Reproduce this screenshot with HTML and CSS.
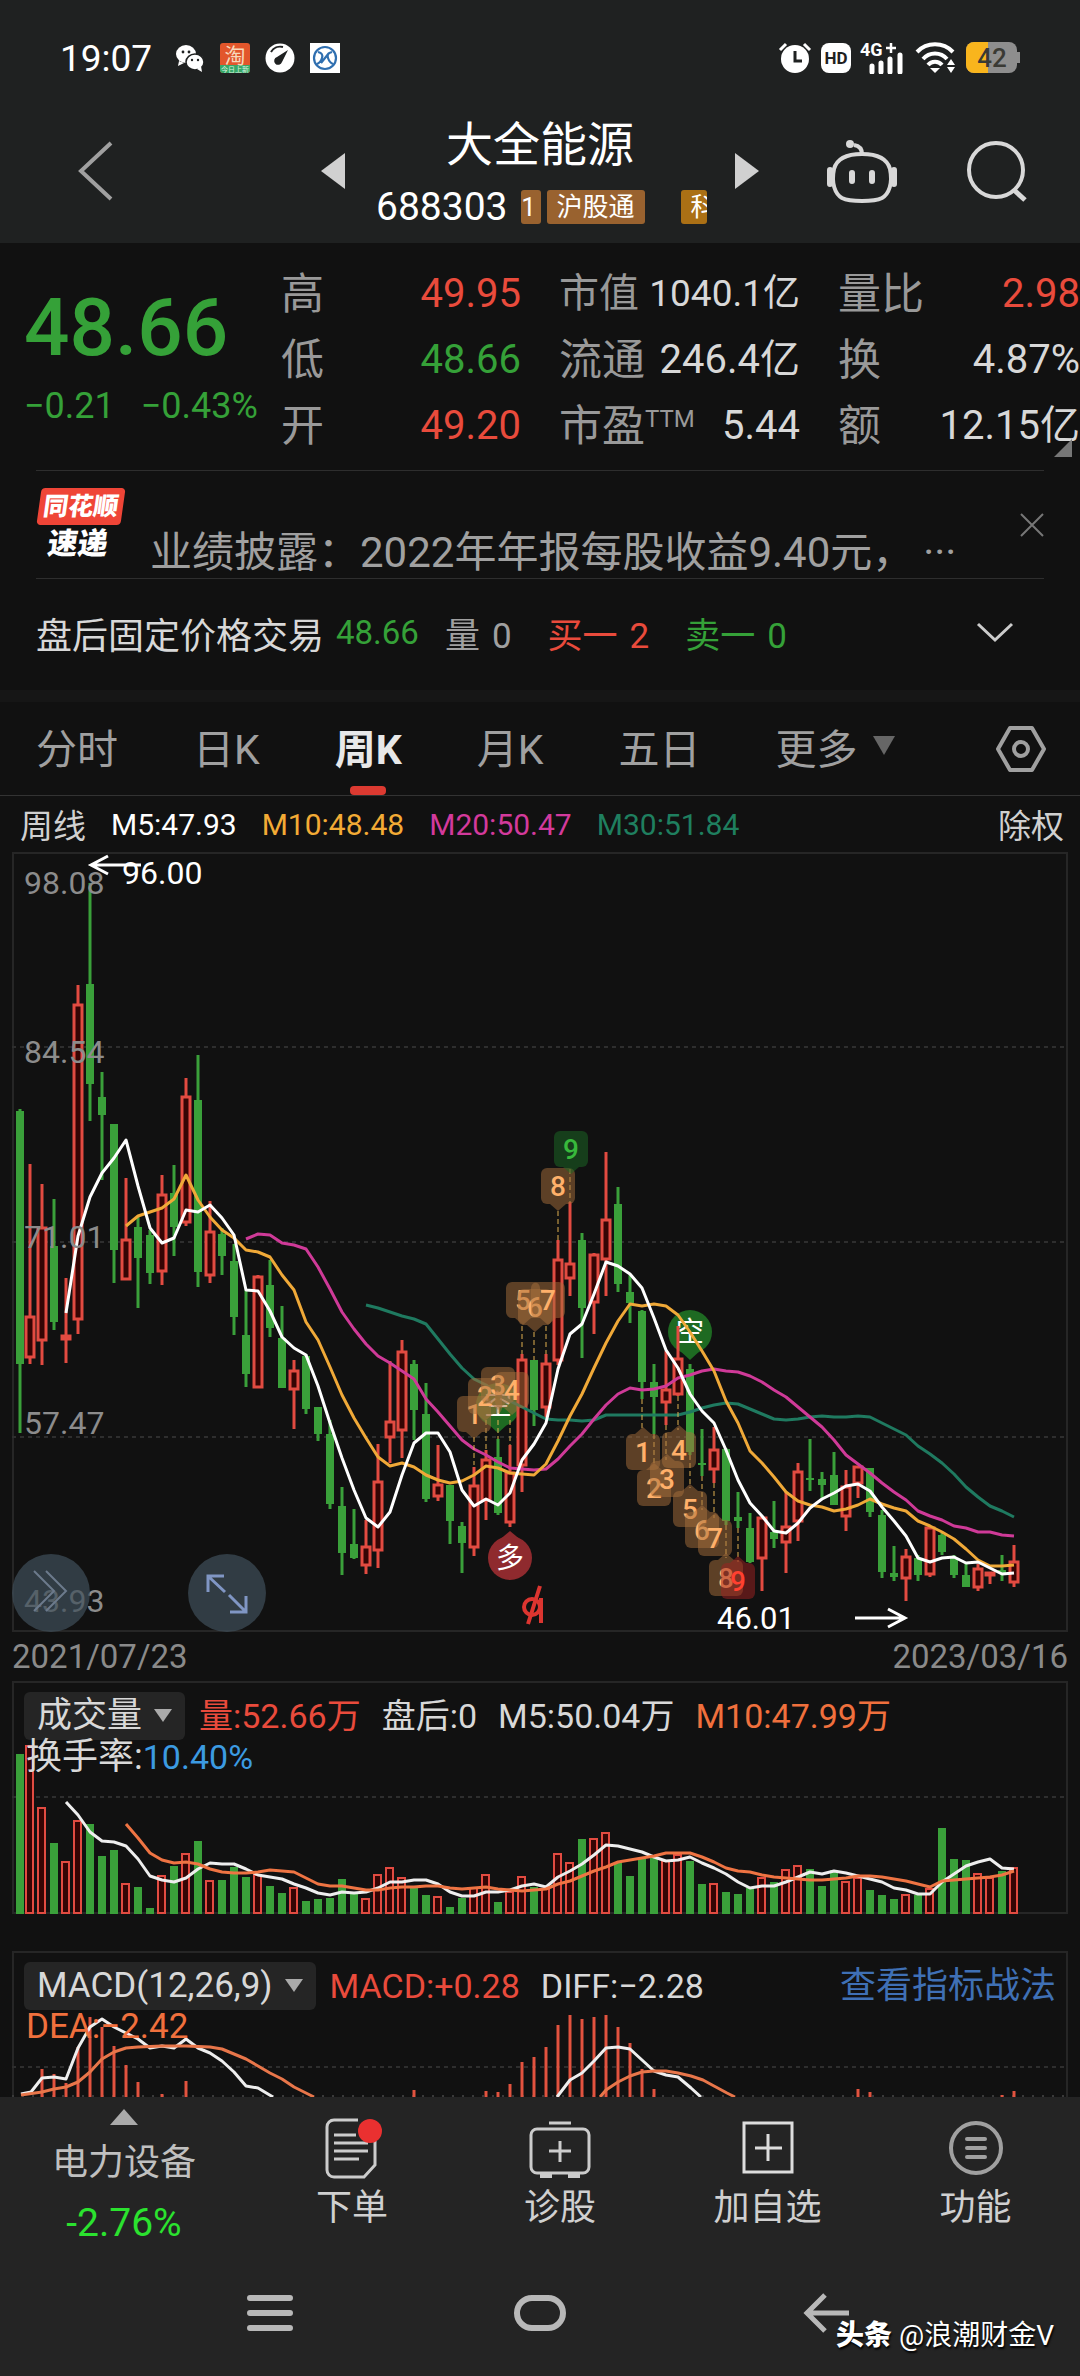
FILE: index.html
```html
<!DOCTYPE html>
<html lang="zh-CN">
<head>
<meta charset="utf-8">
<meta name="viewport" content="width=device-width, initial-scale=1">
<title>大全能源 688303</title>
<link rel="stylesheet" href="styles.css">
</head>
<body>
<header class="top">
  <div class="status">
    <span class="clock">19:07</span>
    <svg class="st-icon" width="30" height="30" viewBox="0 0 30 30"><ellipse cx="11" cy="11" rx="10" ry="9" fill="#fff"/><path d="M4 18l-1 5 6-3z" fill="#fff"/><ellipse cx="20" cy="19" rx="9" ry="8" fill="#fff" stroke="#1f2121" stroke-width="1.5"/><path d="M22 26l5 3-1-6z" fill="#fff"/><g fill="#1f2121"><circle cx="8" cy="9" r="1.4"/><circle cx="14" cy="9" r="1.4"/><circle cx="17" cy="17" r="1.2"/><circle cx="23" cy="17" r="1.2"/></g></svg>
    <svg class="st-icon" width="30" height="30" viewBox="0 0 30 30"><rect width="30" height="30" rx="3" fill="#e2562b"/><path d="M0 22h30v5a3 3 0 0 1-3 3H3a3 3 0 0 1-3-3z" fill="#37a868"/><text x="15" y="20" font-size="21" text-anchor="middle" fill="#f7d8bb">淘</text><text x="15" y="29" font-size="7" text-anchor="middle" fill="#d8f5e0">今日上新</text></svg>
    <svg class="st-icon" width="30" height="30" viewBox="0 0 30 30"><circle cx="15" cy="15" r="14.500" fill="#fff"/><path d="M6 9a11 11 0 0 1 12-5" stroke="#1f2121" stroke-width="2" fill="none"/><path d="M23 7L12 14a4 4 0 1 0 5 5z" fill="#1f2121"/></svg>
    <svg class="st-icon" width="30" height="30" viewBox="0 0 30 30"><rect width="30" height="30" fill="#fff"/><circle cx="15" cy="15" r="11" fill="none" stroke="#2f6fb0" stroke-width="2.200"/><path d="M8 9c4 1 5 3 4 6s-2 5-5 6M22 9c-4 1-5 3-4 6s2 5 5 6M11 20l8-10" stroke="#2f6fb0" stroke-width="2.200" fill="none"/></svg>
    <span class="grow"></span>
    <svg class="st-icon" width="34" height="32" viewBox="0 0 34 32"><circle cx="17" cy="17" r="14" fill="#fff"/><path d="M2 8l6-6M32 8l-6-6" stroke="#fff" stroke-width="3"/><path d="M17 9v10h7" stroke="#1f2121" stroke-width="3" fill="none"/></svg>
    <svg class="st-icon" width="30" height="30" viewBox="0 0 30 30"><rect width="30" height="30" rx="8" fill="#fff"/><text x="15" y="21" font-size="17" font-weight="700" text-anchor="middle" fill="#1f2121">HD</text></svg>
    <svg class="st-icon" width="46" height="32" viewBox="0 0 46 32"><text x="0" y="14" font-size="18" font-weight="700" fill="#fff">4G</text><path d="M26 6h10M31 1v10" stroke="#fff" stroke-width="2.500"/><path d="M12 30v-6M21 30v-9M30 30v-13M40 30v-17" stroke="#fff" stroke-width="5" stroke-linecap="round"/></svg>
    <svg class="st-icon" width="42" height="32" viewBox="0 0 42 32"><g fill="none" stroke="#fff" stroke-width="4"><path d="M2 10a25 25 0 0 1 36 0M8 17a16 16 0 0 1 24 0M13 23a9 9 0 0 1 14 0"/></g><path d="M15 26h10l-5 5z" fill="#fff"/><path d="M32 23l4-6 4 6zM32 25l4 6 4-6z" fill="#fff"/></svg>
    <svg class="st-icon" width="54" height="32" viewBox="0 0 54 32"><rect width="51" height="31" rx="8" fill="#8e8e8e"/><path d="M8 0h14v31H8a8 8 0 0 1-8-8V8a8 8 0 0 1 8-8z" fill="#f9b51d"/><rect x="51" y="10" width="3" height="11" fill="#8e8e8e"/><text x="26" y="25" font-size="26" text-anchor="middle" font-weight="500" fill="#3a3a34">42</text></svg>
  </div>
  <div class="titlebar">
    <button class="plain" aria-label="返回"><svg width="40" height="64" viewBox="0 0 40 64"><path d="M35 4L5 32l30 28" fill="none" stroke="#a0a0a0" stroke-width="4"/></svg></button>
    <button class="plain" aria-label="上一只"><svg width="24" height="36" viewBox="0 0 24 36"><path d="M24 0v36L0 18z" fill="#d0d0d0"/></svg></button>
    <div class="name">
      <h1>大全能源</h1>
      <div class="code"><span>688303</span><i class="tag cut">1</i><i class="tag">沪股通</i><i class="tag gold">科</i></div>
    </div>
    <button class="plain" aria-label="下一只"><svg width="24" height="36" viewBox="0 0 24 36"><path d="M0 0v36l24-18z" fill="#d0d0d0"/></svg></button>
    <button class="plain" aria-label="智能助手"><svg width="70" height="64" viewBox="0 0 70 64"><g fill="none" stroke="#d8d8d8" stroke-width="4"><path d="M35 15c14 0 25 4 28 15 3 14-1 25-8 29-8 4-32 4-40 0-7-4-11-15-8-29 3-11 14-15 28-15z"/><path d="M35 15c0-5-2-8-8-9"/></g><circle cx="23" cy="5" r="4" fill="#d8d8d8"/><path d="M3 31v14M67 31v14M25 34v8M45 34v8" stroke="#d8d8d8" stroke-width="6" stroke-linecap="round"/></svg></button>
    <button class="plain" aria-label="搜索"><svg width="62" height="62" viewBox="0 0 62 62"><circle cx="30" cy="30" r="27" fill="none" stroke="#d8d8d8" stroke-width="4"/><path d="M48 50l11 10" stroke="#d8d8d8" stroke-width="5"/></svg></button>
  </div>
</header>

<main>
  <section class="quote">
    <div class="last green"><strong>48.66</strong><div><span>−0.21</span><span>−0.43%</span></div></div>
    <dl><div><dt>高</dt><dd class="red">49.95</dd></div><div><dt>低</dt><dd class="green">48.66</dd></div><div><dt>开</dt><dd class="red">49.20</dd></div></dl>
    <dl><div class="tight"><dt>市值</dt><dd>1040.1亿</dd></div><div><dt>流通</dt><dd>246.4亿</dd></div><div><dt>市盈<sup>TTM</sup></dt><dd>5.44</dd></div></dl>
    <dl class="edge"><div><dt>量比</dt><dd class="red">2.98</dd></div><div><dt>换</dt><dd>4.87%</dd></div><div><dt>额</dt><dd>12.15亿</dd></div></dl>
    <svg class="corner" width="18" height="18" viewBox="0 0 18 18"><path d="M18 0v18H0z" fill="#777"/></svg>
  </section>

  <section class="news">
    <div class="brand"><b>同花顺</b><em>速递</em></div>
    <a href="#news">业绩披露：2022年年报每股收益9.40元，<span>···</span></a>
    <button class="plain close" aria-label="关闭"><svg width="24" height="24" viewBox="0 0 24 24"><path d="M1 1l22 22M23 1L1 23" stroke="#777" stroke-width="2"/></svg></button>
  </section>

  <section class="after">
    <span>盘后固定价格交易</span><span class="green g1">48.66</span><span class="dim g2">量<span>0</span></span><span class="red g3">买一<span>2</span></span><span class="green g3">卖一<span>0</span></span>
    <button class="plain fold" aria-label="展开"><svg width="38" height="22" viewBox="0 0 38 22"><path d="M2 2l17 16L36 2" fill="none" stroke="#ccc" stroke-width="3"/></svg></button>
  </section>

  <nav class="tabs" aria-label="周期">
    <button>分时</button><button>日K</button><button class="on">周K</button><button>月K</button><button>五日</button>
    <button class="more">更多<svg width="24" height="20" viewBox="0 0 24 20"><path d="M1 0h22L12 19z" fill="#666"/></svg></button>
    <button class="setup" aria-label="设置"><svg width="50" height="46" viewBox="0 0 50 46"><path d="M14 2h22l12 21-12 21H14L2 23z" fill="none" stroke="#a0a0a0" stroke-width="4" stroke-linejoin="round"/><circle cx="25" cy="23" r="7" fill="none" stroke="#a0a0a0" stroke-width="4"/></svg></button>
  </nav>

  <div class="legend">
    <b>周线</b><span>M5:47.93</span><span class="amber">M10:48.48</span><span class="pink">M20:50.47</span><span class="teal">M30:51.84</span><b class="right">除权</b>
  </div>

  <section class="stack" aria-label="周K线图">
    <svg id="kline" viewBox="0 852 1080 780"></svg>
    <button class="round first" aria-label="前移"><svg width="78" height="78" viewBox="0 0 78 78"><path d="M22 17l20 20-20 20M34 17l20 20-20 20" fill="none" stroke="#6c7a8c" stroke-width="2"/></svg></button>
    <button class="round second" aria-label="全屏"><svg width="78" height="78" viewBox="0 0 78 78"><path d="M20 38V22h16M21 23l16 15M58 42v16H42M57 57L41 41" fill="none" stroke="#8096c4" stroke-width="3"/></svg></button>
  </section>
  <div class="dates"><time>2021/07/23</time><time>2023/03/16</time></div>

  <section class="stack volume">
    <svg id="vol" viewBox="0 1681 1080 233"></svg>
    <div class="info">
      <button class="pick">成交量<svg width="18" height="14" viewBox="0 0 18 14"><path d="M0 0h18L9 13z" fill="#aaa"/></svg></button>
      <span class="red">量:52.66万</span><span>盘后:0</span><span>M5:50.04万</span><span class="orange">M10:47.99万</span>
      <p>换手率:<span class="blue">10.40%</span></p>
    </div>
  </section>

  <section class="stack macd">
    <svg id="macd" viewBox="0 1951 1080 146"></svg>
    <div class="info">
      <button class="pick">MACD(12,26,9)<svg width="18" height="14" viewBox="0 0 18 14"><path d="M0 0h18L9 13z" fill="#aaa"/></svg></button>
      <span class="red">MACD:+0.28</span><span>DIFF:−2.28</span><a href="#guide">查看指标战法</a>
      <p class="orange">DEA:−2.42</p>
    </div>
  </section>
</main>

<footer>
  <nav class="actions" aria-label="操作">
    <a class="sector" href="#sector"><svg width="28" height="16" viewBox="0 0 28 16"><path d="M14 0l14 16H0z" fill="#aaa"/></svg><span>电力设备</span><b>-2.76%</b></a>
    <button><svg width="60" height="64" viewBox="0 0 60 64"><path d="M36 4H12a7 7 0 0 0-7 7v43a7 7 0 0 0 7 7h30l11-12V25" fill="none" stroke="#ccc" stroke-width="3"/><path d="M12 19h22M12 27h34M12 35h34M12 43h25" stroke="#ccc" stroke-width="3"/><circle cx="48" cy="15" r="12" fill="#ea3030"/></svg>下单</button>
    <button><svg width="64" height="64" viewBox="0 0 64 64"><g fill="none" stroke="#ccc" stroke-width="3"><rect x="3" y="13" width="58" height="44" rx="6"/><path d="M21 7h22M32 25v21M21 35h22"/></g><path d="M12 57h12v5H12zM40 57h12v5H40z" fill="#ccc"/></svg>诊股</button>
    <button><svg width="56" height="64" viewBox="0 0 56 64"><g fill="none" stroke="#ddd" stroke-width="3"><rect x="4" y="7" width="48" height="49"/><path d="M28 18v27M15 32h27"/></g></svg>加自选</button>
    <button><svg width="58" height="64" viewBox="0 0 58 64"><circle cx="29" cy="32" r="25" fill="none" stroke="#a0a0a0" stroke-width="4"/><path d="M20 23h18M20 32h18M20 41h18" stroke="#a0a0a0" stroke-width="4" stroke-linecap="round"/></svg>功能</button>
  </nav>
  <div class="system">
    <button class="plain" aria-label="最近任务"><svg width="46" height="38" viewBox="0 0 46 38"><path d="M3 4h40M3 19h40M3 34h40" stroke="#b8b8b8" stroke-width="6" stroke-linecap="round"/></svg></button>
    <button class="plain" aria-label="主屏幕"><svg width="54" height="38" viewBox="0 0 54 38"><rect x="4" y="4" width="46" height="30" rx="15" fill="none" stroke="#b8b8b8" stroke-width="6"/></svg></button>
    <button class="plain" aria-label="返回"><svg width="50" height="42" viewBox="0 0 50 42"><path d="M24 3L6 21l18 18M6 21h42" fill="none" stroke="#b8b8b8" stroke-width="5"/></svg></button>
    <div class="mark"><b>头条</b> @浪潮财金V</div>
  </div>
</footer>
<script src="charts.js"></script>
</body>
</html>
```
FILE: styles.css
```css
* { box-sizing: border-box; }
body { margin: 0; background: #111; color: #d8d8d8; font-family: Roboto, "Noto Sans CJK SC", sans-serif; font-size: 33px; }
svg { display: block; flex: none; }
svg text { font-family: Roboto, "Noto Sans CJK SC", sans-serif; }
button { font: inherit; color: inherit; background: none; border: 0; padding: 0; }
a { color: inherit; text-decoration: none; }
h1, p, dl, dd { margin: 0; }
b, i, em { font-style: normal; font-weight: 400; }
.red { color: #e94b3c; }
.green { color: #35a138; }
.amber { color: #f3ab35; }
.pink { color: #d33a9c; }
.teal { color: #1f7f5f; }
.orange { color: #f0703d; }
.blue { color: #3c9be2; }
.dim { color: #a0a0a0; }
.grow { flex: 1; }

.top { background: #1f2121; }
.status { display: flex; align-items: center; gap: 9px; height: 80px; padding: 36px 60px 0; color: #fff; }
.clock { font-size: 37px; margin-right: 8px; }
.status .st-icon:nth-child(-n+5) { margin-left: 6px; }
.titlebar { display: grid; grid-template-columns: 245fr 24px 390fr 24px 68fr 70px 69fr 62px; align-items: center; height: 163px; padding: 19px 52px 0 76px; }
.titlebar button:nth-child(5) { grid-column: 6; }
.titlebar button:nth-child(6) { grid-column: 8; }
.name { text-align: center; color: #fff; height: 144px; padding-top: 16px; }
h1 { font-size: 47px; font-weight: 400; line-height: 60px; }
.code { display: flex; align-items: center; gap: 6px; height: 64px; padding-left: 31px; font-size: 39px; }
.code span { margin-right: 7px; }
.tag { background: #99622f; border-radius: 3px; font-size: 26px; line-height: 34px; padding: 0 10px; }
.tag.cut { width: 20px; padding: 0 4px 0 0; }
.tag.gold { background: #ab7015; margin-left: 30px; width: 26px; padding: 0 0 0 10px; overflow: hidden; }

.quote { position: relative; display: grid; grid-template-columns: 257fr 278fr 279fr 242fr; padding: 18px 0 11px 24px; }
.last { padding-top: 28px; }
.last strong { display: block; font-size: 80px; font-weight: 500; line-height: 78px; }
.last div { display: flex; gap: 26px; font-size: 36px; line-height: 78px; white-space: nowrap; }
dl { padding-right: 38px; }
dl.edge { padding-right: 0; }
dl div { display: flex; justify-content: space-between; line-height: 66px; height: 66px; white-space: nowrap; }
dt { font-size: 43px; color: #999; }
dd { font-size: 40px; }
.tight dt { font-size: 40px; }
.tight dd { font-size: 37px; }
sup { font-size: 24px; line-height: 0; vertical-align: 14px; }
.corner { position: absolute; right: 8px; bottom: 13px; }

.news { display: flex; align-items: flex-end; height: 109px; margin: 0 36px; border: solid #2e2e2e; border-width: 1px 0; }
.brand { width: 114px; align-self: flex-start; padding-top: 17px; }
.brand b, .brand em { display: block; width: 84px; text-align: center; color: #fff; font-weight: 900; transform: skewX(-8deg); }
.brand b { background: #ef4537; border-radius: 4px; font-size: 25px; line-height: 37px; margin-left: 3px; }
.brand em { font-size: 30px; line-height: 38px; }
.news a { flex: 1; font-size: 42px; line-height: 50px; color: #a0a0a0; white-space: nowrap; }
.news a span { margin-left: 30px; }
.close { align-self: flex-start; margin-top: 42px; }

.after { display: flex; align-items: center; height: 111px; padding: 0 66px 4px 36px; font-size: 36px; white-space: nowrap; }
.after .green, .after .dim, .after .red { font-size: 35px; }
.after .green span, .after .dim span, .after .red span { margin-left: 12px; }
.g1.g1 { margin-left: 12px; font-size: 33px; }
.g2 { margin-left: 26px; }
.g3 { margin-left: 36px; }
.fold { margin-left: auto; }

.tabs { display: flex; align-items: center; gap: 75px; height: 106px; padding: 0 34px 0 36px; border-top: 12px solid #161616; border-bottom: 1px solid #333; font-size: 41px; color: #a0a0a0; }
.tabs button { position: relative; height: 93px; padding-bottom: 6px; white-space: nowrap; }
.tabs .on { color: #e8e8e8; font-weight: 700; }
.tabs .on::after { content: ""; position: absolute; left: calc(50% - 18px); bottom: 0; width: 36px; height: 9px; border-radius: 4px; background: #dc3a31; }
.tabs .more { display: flex; align-items: center; gap: 14px; }
.tabs .setup { margin-left: auto; padding: 0; }

.legend { display: flex; align-items: center; gap: 25px; height: 56px; padding: 0 16px 0 20px; font-size: 30px; color: #fff; }
.legend b { font-size: 33px; color: #d0d0d0; }
.legend .teal { color: #1f7f5f; }
.legend .pink { color: #d33a9c; }
.legend .amber { color: #f3ab35; }
.legend .right { margin-left: auto; }

.stack { display: grid; position: relative; }
.stack > svg, .info { grid-area: 1 / 1; width: 100%; }
.round { position: absolute; bottom: 0; border-radius: 50%; background: rgba(62, 78, 90, .7); }
.first { left: 12px; }
.second { left: 188px; }
.dates { display: flex; justify-content: space-between; padding: 0 12px; line-height: 49px; font-size: 33px; color: #8a8a8a; }
.info { position: relative; display: flex; flex-wrap: wrap; align-content: flex-start; align-items: center; column-gap: 21px; padding: 11px 24px 0 24px; line-height: 46px; font-size: 34px; white-space: nowrap; }
.pick { display: flex; align-items: center; gap: 12px; height: 48px; padding: 0 13px; border-radius: 6px; background: #252525; font-size: 35px; margin-right: -7px; }
.info p { width: 100%; line-height: 34px; padding-left: 2px; font-size: 36px; }
.info p .blue { font-size: 34px; }
.info a { margin-left: auto; font-size: 36px; color: #3f70b5; }
.macd { margin-top: 37px; overflow: hidden; }
.macd .orange { font-size: 35px; }

footer { background: #242424; }
.actions { display: grid; grid-template-columns: 248fr 208fr 208fr 207fr 209fr; height: 153px; font-size: 36px; color: #d0d0d0; }
.actions button, .sector { display: flex; flex-direction: column; align-items: center; line-height: 56px; }
.actions button { padding-top: 19px; }
.sector { padding-top: 12px; color: #c0c0c0; }
.sector span { margin-top: 10px; }
.sector b { color: #2be22f; margin-top: 4px; font-size: 39px; }
.system { position: relative; display: grid; grid-template-columns: 135fr 270fr 270fr 16fr 270fr 119fr; align-items: center; height: 126px; }
.system button { justify-self: center; }
.system button:nth-child(1) { grid-column: 2; }
.system button:nth-child(2) { grid-column: 3; }
.system button:nth-child(3) { grid-column: 5; }
.mark { position: absolute; right: 26px; bottom: 20px; font-size: 28px; line-height: 40px; color: #fff; text-shadow: 1px 2px 2px #000; }
.mark b { font-weight: 900; }
```
FILE: charts.js
```js
const RED = '#e24b41', GREEN = '#3aa03a', WINE = '#350504';
const X = i => i === 0 ? 20 : 18 + 12 * i;
const line = (x1, y1, x2, y2, c, w = 2, more = '') => `<line x1="${x1}" y1="${y1}" x2="${x2}" y2="${y2}" stroke="${c}" stroke-width="${w}" ${more}/>`;
const text = (x, y, s, size, c, more = '') => `<text x="${x}" y="${y}" font-size="${size}" fill="${c}" ${more}>${s}</text>`;
const poly = (pts, c, w = 3) => `<polyline points="${pts.map(p => p.join(',')).join(' ')}" fill="none" stroke="${c}" stroke-width="${w}" stroke-linejoin="round"/>`;
const series = (start, values, f = v => v) => values.map((v, k) => [X(start + k), f(v)]);
const grid = y => line(12, y, 1067, y, '#2e2e2e', 2, 'stroke-dasharray="4 4"');
const frame = (y, h) => `<rect x="13" y="${y + 1}" width="1054" height="${h}" fill="none" stroke="#262626" stroke-width="2"/>`;

// weekly candles: up/down, high, body top, body bottom, low
const candles = `G 1109 1111 1364 1433|R 1164 1317 1357 1364|R 1184 1228 1340 1365|G 1199 1246 1322 1330|R 1278 1336 1339 1363|R 985 1005 1319 1334|G 883 984 1084 1121|G 1072 1097 1115 1180|G 1124 1124 1250 1283|R 1178 1240 1279 1279|G 1217 1227 1258 1308|G 1230 1235 1273 1284|R 1175 1195 1271 1285|G 1165 1193 1227 1256|R 1078 1097 1222 1226|G 1055 1100 1272 1287|R 1201 1232 1275 1283|G 1228 1234 1256 1275|G 1244 1261 1317 1335|G 1290 1335 1374 1387|R 1275 1277 1387 1387|G 1260 1285 1328 1337|G 1306 1338 1388 1388|R 1360 1371 1389 1429|G 1354 1356 1409 1414|G 1407 1407 1434 1441|G 1420 1434 1504 1509|G 1487 1506 1553 1575|G 1509 1544 1558 1559|R 1520 1547 1565 1574|R 1444 1482 1550 1568|R 1361 1422 1437 1463|R 1340 1352 1430 1458|G 1360 1364 1410 1440|G 1383 1414 1499 1502|R 1445 1485 1496 1501|G 1485 1485 1521 1544|G 1522 1526 1543 1573|R 1467 1486 1547 1556|R 1450 1460 1500 1520|G 1439 1457 1513 1515|R 1445 1473 1522 1527|R 1354 1360 1465 1492|G 1360 1360 1410 1426|R 1354 1364 1407 1418|R 1240 1260 1360 1365|R 1202 1264 1278 1296|G 1233 1240 1308 1358|R 1253 1255 1302 1334|R 1152 1220 1259 1296|G 1187 1204 1284 1292|G 1275 1292 1303 1323|G 1310 1311 1382 1399|G 1364 1382 1397 1434|R 1351 1390 1402 1425|R 1326 1359 1394 1396|G 1364 1369 1452 1455|G 1429 1463 1465 1476|R 1427 1450 1469 1483|G 1448 1449 1521 1525|G 1492 1517 1521 1528|G 1513 1528 1562 1563|R 1516 1518 1558 1591|G 1501 1532 1539 1548|R 1492 1527 1542 1573|R 1463 1472 1521 1541|G 1439 1478 1480 1491|G 1472 1479 1485 1498|G 1452 1475 1505 1505|R 1470 1487 1516 1531|R 1466 1467 1483 1498|G 1468 1468 1512 1517|G 1510 1515 1572 1578|G 1546 1573 1577 1581|R 1549 1557 1578 1601|G 1555 1558 1575 1581|R 1527 1528 1574 1577|G 1533 1535 1552 1555|G 1555 1558 1575 1578|G 1564 1575 1587 1587|R 1564 1569 1587 1591|R 1572 1573 1575 1584|G 1555 1570 1573 1581|R 1545 1562 1582 1587`
  .split('|').map(s => { const [c, ...n] = s.split(' '); return [c, ...n.map(Number)]; });

const ma5 = [1313,1236,1197,1173,1158,1140,1186,1228,1243,1238,1210,1212,1205,1218,1235,1290,1291,1311,1337,1348,1355,1386,1423,1458,1490,1518,1527,1512,1475,1443,1433,1433,1452,1490,1506,1499,1505,1493,1460,1444,1423,1369,1334,1324,1294,1262,1266,1274,1288,1318,1350,1368,1394,1411,1423,1450,1480,1503,1516,1531,1533,1523,1508,1499,1493,1486,1484,1491,1507,1521,1536,1558,1562,1558,1557,1563,1562,1568,1574,1573];
const ma10 = [1226,1216,1212,1208,1199,1175,1200,1217,1230,1238,1250,1252,1257,1275,1290,1322,1340,1367,1395,1418,1438,1457,1466,1463,1467,1475,1480,1483,1481,1475,1466,1468,1473,1474,1475,1464,1441,1416,1394,1368,1343,1321,1304,1306,1304,1306,1315,1332,1351,1371,1401,1423,1451,1463,1477,1492,1501,1505,1507,1511,1509,1505,1499,1504,1508,1511,1521,1526,1532,1539,1549,1560,1566,1566,1565];
const ma20 = [1239,1234,1235,1243,1245,1249,1267,1289,1312,1329,1344,1356,1363,1371,1379,1399,1412,1426,1440,1449,1455,1462,1468,1469,1470,1469,1459,1446,1434,1419,1405,1394,1388,1390,1389,1386,1378,1375,1371,1369,1371,1372,1376,1382,1390,1397,1407,1417,1427,1440,1455,1464,1473,1483,1492,1500,1511,1516,1520,1526,1528,1532,1532,1535,1536];
const ma30 = [1305,1308,1312,1316,1319,1324,1339,1354,1368,1379,1385,1395,1401,1407,1413,1419,1420,1420,1421,1420,1415,1415,1415,1415,1415,1415,1415,1412,1408,1405,1403,1404,1409,1414,1419,1420,1419,1417,1416,1417,1417,1416,1417,1423,1429,1435,1446,1454,1463,1474,1487,1497,1506,1511,1517];

// sequence markers: x, y, digit
const above = [[474,1414,1],[485,1396,2],[498,1385,3],[512,1390,4],[523,1300,5],[535,1307,6],[548,1300,7],[558,1186,8],[571,1149,9]];
const below = [[643,1452,1],[654,1488,2],[667,1479,3],[679,1450,4],[690,1509,5],[702,1530,6],[715,1538,7],[726,1578,8],[738,1581,9]];
const stems = [[474,1437,1465],[486,1420,1450],[498,1420,1439],[510,1420,1445],[522,1326,1354],[534,1332,1360],[546,1326,1354],[558,1211,1240],[570,1169,1202],[642,1399,1431],[654,1434,1464],[666,1425,1460],[678,1396,1430],[690,1455,1488],[702,1476,1510],[714,1483,1518],[726,1525,1558],[738,1528,1562]];
const badge = (up, [x, y, n]) => {
  const hot = n === 9, box = hot ? (up ? '#1c6b25' : '#a02222') : '#a8703c', ink = hot ? (up ? '#38b93c' : '#ff4030') : '#ffb06a';
  const tip = up ? `M${x - 8} ${y + 18}l8 7l8-7z` : `M${x - 8} ${y - 18}l8-7l8 7z`;
  return `<g fill="${box}" opacity=".5"><rect x="${x - 17}" y="${y - 18}" width="34" height="36" rx="6"/><path d="${tip}"/></g>` + text(x, y + 10, n, 28, ink, 'text-anchor="middle" font-weight="500"');
};
const pin = (x, y, s, c, up) => `<g fill="${c}"><circle cx="${x}" cy="${y}" r="22"/><path d="${up ? `M${x - 12} ${y - 17}L${x} ${y - 27}L${x + 12} ${y - 17}z` : `M${x - 12} ${y + 17}L${x} ${y + 28}L${x + 12} ${y + 17}z`}"/></g>` + text(x, y + 10, s, 28, '#fff', 'text-anchor="middle"');

const body = ([c, hi, top, bot, lo], i) => {
  const x = X(i);
  if (c === 'G') return line(x, hi, x, lo, GREEN, 3) + `<rect x="${x - 4}" y="${top}" width="8" height="${Math.max(2, bot - top)}" fill="${GREEN}"/>`;
  return line(x, hi, x, top, RED, 3) + line(x, bot, x, lo, RED, 3) + `<rect x="${x - 4}" y="${top}" width="8" height="${bot - top}" fill="${WINE}" stroke="${RED}" stroke-width="3"/>`;
};

document.getElementById('kline').innerHTML =
  frame(852, 778) + [1047, 1242, 1437].map(grid).join('') +
  pin(498, 1405, '空', '#1e6a22', false) + pin(690, 1332, '空', '#1e6a22', false) +
  candles.map(body).join('') +
  poly(series(29, ma30), '#1f7a60') + poly(series(19, ma20), '#cf3a98') + poly(series(9, ma10), '#f0a938') + poly(series(4, ma5), '#fff') +
  stems.map(([x, a, b]) => line(x, a, x, b, '#e0b050', 1, 'stroke-dasharray="5 3"')).join('') +
  above.map(m => badge(true, m)).join('') + below.map(m => badge(false, m)).join('') +
  pin(510, 1558, '多', '#8f2a2e', true) +
  '<g fill="none" stroke="#dc3530" stroke-width="4"><circle cx="532" cy="1607" r="8"/><path d="M541 1598v25M540 1586l-12 38"/></g>' +
  [['98.08', 883], ['84.54', 1052], ['71.01', 1237], ['57.47', 1423], ['43.93', 1601]].map(([s, y]) => text(24, y + 11, s, 32, '#8c8c8c')).join('') +
  text(122, 884, '96.00', 32, '#fff') + text(717, 1629, '46.01', 31, '#fff') +
  '<path d="M141 865H91M108 856l-17 9 17 9M855 1618h50M888 1609l17 9-17 9" fill="none" stroke="#fff" stroke-width="3"/>';

// volume bars and averages, measured from the pane top in thirds of a pixel
const vtops = [252,225,412,520,572,450,463,558,541,638,652,714,614,588,550,514,630,630,590,621,612,648,669,652,693,687,684,627,672,683,611,592,620,650,675,677,711,683,652,611,696,662,617,650,655,548,575,507,503,485,576,618,566,560,570,553,573,642,638,666,672,654,622,636,598,585,598,648,600,633,620,660,675,687,672,675,655,474,567,570,608,620,603,590];
const v5 = [397,435,485,512,517,528,568,617,630,637,624,598,578,581,582,597,615,620,628,641,655,668,675,667,668,667,655,637,635,629,630,642,665,678,678,666,667,660,648,643,650,622,602,583,555,525,527,536,546,560,572,570,561,580,593,612,635,654,648,648,637,620,605,612,602,610,618,628,636,654,660,671,672,635,612,588,575,567,593,597];
const v10 = [461,505,550,570,579,576,583,598,606,609,608,605,600,602,607,623,641,648,647,654,660,660,655,652,652,648,647,653,656,654,650,657,661,662,660,656,643,632,617,603,590,577,570,564,557,548,548,548,562,577,595,602,607,616,622,625,627,629,631,628,624,618,618,620,627,632,643,650,632,630,626,625,622,614,604];
const vy = v => Math.round(1670 + v / 3);
document.getElementById('vol').innerHTML = frame(1681, 231) + grid(1797) +
  vtops.map((v, i) => {
    const x = X(i), y = vy(v);
    return candles[i][0] === 'G' ? `<rect x="${x - 4}" y="${y}" width="8" height="${1914 - y}" fill="${GREEN}"/>` : `<rect x="${x - 4}" y="${y + 1}" width="7" height="${1912 - y}" fill="${WINE}" stroke="${RED}" stroke-width="2"/>`;
  }).join('') + poly(series(4, v5, vy), '#eee') + poly(series(9, v10, vy), '#ef7443');

const my = v => Math.round(1940 + v / 3);
const bars = [[42,388],[54,403],[66,430],[78,320],[90,232],[102,262],[114,317],[126,375],[138,427],[162,462],[186,423],[414,450],[486,453],[498,457],[510,433],[522,365],[534,350],[546,320],[558,255],[570,225],[582,238],[594,232],[606,225],[618,262],[630,308],[642,388],[654,447],[858,447],[870,455],[1002,465],[1014,453]];
const curve = (s, c) => poly(s.map(([x, v]) => [x, my(v)]), c);
document.getElementById('macd').innerHTML = frame(1951, 300) + grid(2067) + line(12, 2096, 1067, 2096, '#3a3a3a', 2, 'stroke-dasharray="2 8"') +
  bars.map(([x, v]) => line(x, my(v), x, 2097, '#e2533f', 3)).join('') +
  curve([[21,463],[31,455],[42,413],[54,412],[66,416],[78,325],[90,262],[102,238],[114,260],[126,280],[138,297],[150,323],[162,318],[174,325],[186,297],[198,325],[210,340],[222,362],[234,397],[246,437],[258,443],[273,471]], '#eee') +
  curve([[557,471],[570,420],[582,400],[594,363],[606,325],[618,322],[630,328],[642,360],[654,392],[666,405],[678,412],[691,445],[701,471]], '#eee') +
  curve([[21,464],[42,455],[54,447],[66,440],[78,425],[90,395],[102,358],[114,335],[126,324],[138,320],[162,319],[186,317],[210,320],[222,326],[234,342],[246,358],[258,378],[270,398],[282,418],[294,440],[306,460],[314,471]], '#e8764a') +
  curve([[600,471],[606,450],[618,425],[630,407],[642,397],[654,394],[666,394],[678,398],[691,408],[703,420],[714,437],[727,458],[735,471]], '#e8764a');
```
